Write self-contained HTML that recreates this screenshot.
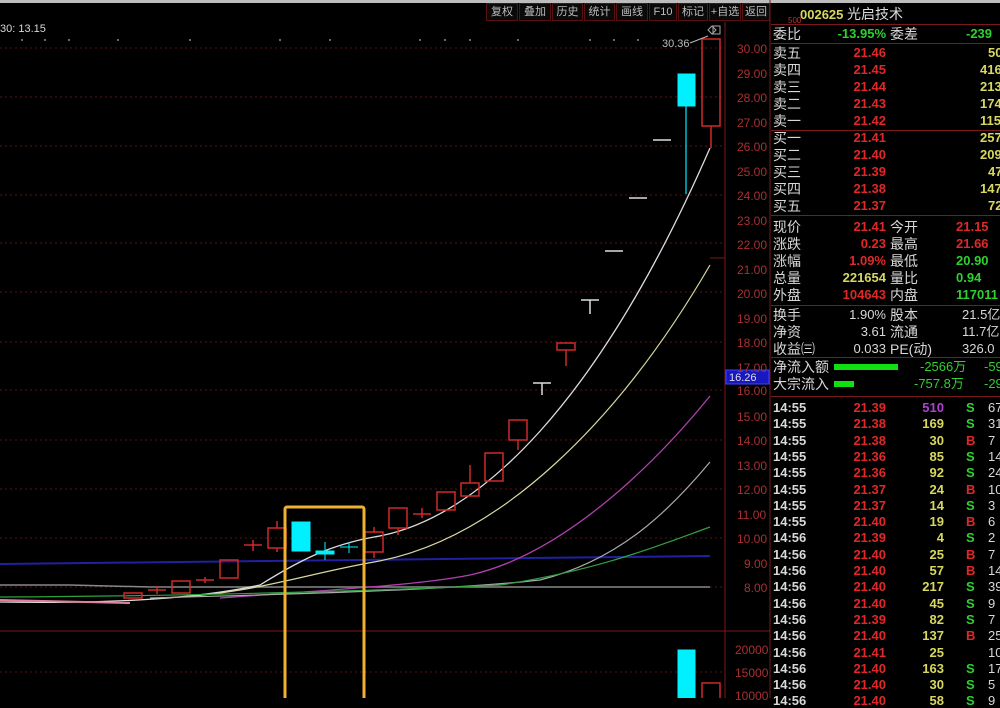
<!DOCTYPE html>
<html><head><meta charset="utf-8"><style>
*{margin:0;padding:0;box-sizing:border-box}
body{width:1000px;height:698px;background:#000;overflow:hidden;position:relative;font-family:"Liberation Sans","Noto Sans CJK SC",sans-serif}
.t{position:absolute;white-space:nowrap;font-size:13px;line-height:14px}
.btn{position:absolute;top:3px;height:18px;border:1px solid #5a1010;color:#bbb;font-size:11px;line-height:16px;text-align:center;background:#0a0a0a;white-space:nowrap;overflow:hidden}
.w{color:#d8d8d8}.r{color:#e02828;font-weight:bold}.y{color:#d8d860;font-weight:bold}.g{color:#30d030;font-weight:bold}.ax{color:#a83030;font-size:12px}
.lb{font-size:14px}
.hl{position:absolute;left:771px;width:229px;height:1px;background:#7a1a1a}
</style></head><body>
<div style="position:absolute;left:0;top:0;width:1000px;height:3px;background:#bdbdbd"></div>
<div class="btn" style="left:486px;width:32px">复权</div>
<div class="btn" style="left:519px;width:32px">叠加</div>
<div class="btn" style="left:552px;width:31px">历史</div>
<div class="btn" style="left:584px;width:31px">统计</div>
<div class="btn" style="left:616px;width:32px">画线</div>
<div class="btn" style="left:649px;width:28px">F10</div>
<div class="btn" style="left:678px;width:30px">标记</div>
<div class="btn" style="left:709px;width:32px">+自选</div>
<div class="btn" style="left:742px;width:28px">返回</div>
<div class="t w" style="left:0;top:22px;font-size:11px">30: 13.15</div>

<svg width="1000" height="698" style="position:absolute;left:0;top:0">
<g stroke="#5a1515" stroke-dasharray="2,3" stroke-width="1">
<line x1="0" y1="48" x2="725" y2="48"/><line x1="0" y1="97" x2="725" y2="97"/><line x1="0" y1="146" x2="725" y2="146"/><line x1="0" y1="195" x2="725" y2="195"/><line x1="0" y1="243" x2="725" y2="243"/><line x1="0" y1="292" x2="725" y2="292"/><line x1="0" y1="342" x2="725" y2="342"/><line x1="0" y1="390" x2="725" y2="390"/><line x1="0" y1="440" x2="725" y2="440"/><line x1="0" y1="489" x2="725" y2="489"/><line x1="0" y1="538" x2="725" y2="538"/><line x1="0" y1="587" x2="725" y2="587"/><line x1="0" y1="672" x2="725" y2="672"/>
</g>
<line x1="0" y1="631" x2="770" y2="631" stroke="#7a1a1a"/>
<line x1="725" y1="22" x2="725" y2="698" stroke="#7a1a1a"/>
<line x1="770" y1="0" x2="770" y2="698" stroke="#7a1a1a"/>
<g fill="#888"><circle cx="22" cy="40" r="1"/><circle cx="45" cy="40" r="1"/><circle cx="69" cy="40" r="1"/><circle cx="118" cy="40" r="1"/><circle cx="190" cy="40" r="1"/><circle cx="280" cy="40" r="1"/><circle cx="330" cy="40" r="1"/><circle cx="420" cy="40" r="1"/><circle cx="445" cy="40" r="1"/><circle cx="470" cy="40" r="1"/><circle cx="518" cy="40" r="1"/><circle cx="590" cy="40" r="1"/><circle cx="614" cy="40" r="1"/><circle cx="638" cy="40" r="1"/></g>
<line x1="0" y1="564" x2="710" y2="556" stroke="#2020a0" stroke-width="2"/>
<polyline points="0,585 70,585 150,587 710,587" fill="none" stroke="#888" stroke-width="1.5"/>
<path d="M0,602 C120,604 200,598 260,585 C300,560 330,545 374,537 C480,520 600,400 710,148" fill="none" stroke="#ddd" stroke-width="1.3"/>
<path d="M160,598 C250,595 300,575 374,562 C500,540 620,420 710,265" fill="none" stroke="#d8d8a0" stroke-width="1.2"/>
<path d="M220,598 C330,590 420,585 470,575 C560,555 650,470 710,396" fill="none" stroke="#b040b0" stroke-width="1.3"/>
<path d="M150,598 C300,594 450,590 540,580 C620,560 670,510 710,462" fill="none" stroke="#aaa" stroke-width="1.2"/>
<path d="M0,597 C200,596 400,590 500,585 C600,570 660,545 710,527" fill="none" stroke="#30a040" stroke-width="1.2"/>
<line x1="0" y1="600" x2="130" y2="603" stroke="#e080a0" stroke-width="2"/>
<g fill="none" stroke="#d02828" stroke-width="1.5">
<rect x="124" y="593" width="18" height="5"/>
<line x1="148" y1="590" x2="166" y2="590"/><line x1="157" y1="586" x2="157" y2="594"/>
<rect x="172" y="581" width="18" height="12"/>
<line x1="196" y1="580" x2="214" y2="580"/><line x1="205" y1="577" x2="205" y2="583"/>
<rect x="220" y="560" width="18" height="18"/>
<line x1="244" y1="545" x2="262" y2="545"/><line x1="253" y1="540" x2="253" y2="551"/>
<rect x="268" y="528" width="18" height="20"/><line x1="277" y1="521" x2="277" y2="528"/><line x1="277" y1="548" x2="277" y2="552"/>
<rect x="365" y="532" width="18" height="20"/><line x1="374" y1="527" x2="374" y2="532"/><line x1="374" y1="552" x2="374" y2="558"/>
<rect x="389" y="508" width="18" height="20"/><line x1="398" y1="528" x2="398" y2="535"/>
<line x1="413" y1="514" x2="431" y2="514"/><line x1="422" y1="508" x2="422" y2="518"/>
<rect x="437" y="492" width="18" height="18"/>
<rect x="461" y="483" width="18" height="13"/><line x1="470" y1="465" x2="470" y2="483"/>
<rect x="485" y="453" width="18" height="28"/>
<rect x="509" y="420" width="18" height="20"/><line x1="518" y1="440" x2="518" y2="450"/>
<rect x="557" y="343" width="18" height="7"/><line x1="566" y1="350" x2="566" y2="366"/>
<rect x="702" y="39" width="18" height="87"/><line x1="711" y1="126" x2="711" y2="148"/>
<rect x="702" y="683" width="18" height="20"/>
</g>
<g stroke="#ddd" stroke-width="1.5">
<line x1="533" y1="383" x2="551" y2="383"/><line x1="542" y1="383" x2="542" y2="395"/>
<line x1="581" y1="300" x2="599" y2="300"/><line x1="590" y1="300" x2="590" y2="314"/>
<line x1="605" y1="251" x2="623" y2="251"/><line x1="629" y1="198" x2="647" y2="198"/><line x1="653" y1="140" x2="671" y2="140"/>
</g>
<g fill="#00f0ff" stroke="#00f0ff">
<rect x="292" y="522" width="18" height="29"/>
<rect x="316" y="551" width="18" height="3"/><line x1="325" y1="542" x2="325" y2="560"/>
<line x1="340" y1="547" x2="358" y2="547"/><line x1="349" y1="542" x2="349" y2="553"/>
<rect x="678" y="74" width="17" height="32"/><line x1="686" y1="106" x2="686" y2="194" stroke-width="1.2"/>
<rect x="678" y="650" width="17" height="48"/>
</g>
<text x="662" y="47" fill="#bbb" font-size="11" font-family="Liberation Sans">30.36</text>
<line x1="690" y1="43" x2="708" y2="36" stroke="#bbb"/>
<path d="M712,26 l4,4 l-4,4 l-4,-4z" fill="none" stroke="#aaa"/>
<rect x="713" y="26" width="7" height="8" fill="none" stroke="#aaa"/>
<rect x="285" y="507" width="79" height="200" fill="none" stroke="#f0b030" stroke-width="3" rx="2"/>
<rect x="726" y="370" width="43" height="14" fill="#1818c0" stroke="#4040ff"/>
<text x="729" y="381" fill="#ddd" font-size="11" font-family="Liberation Sans">16.26</text>
<g stroke="#7a1a1a"><line x1="710" y1="258" x2="725" y2="258"/></g>
</svg>

<div class="t ax" style="left:737px;top:42px">30.00</div>
<div class="t ax" style="left:737px;top:67px">29.00</div>
<div class="t ax" style="left:737px;top:91px">28.00</div>
<div class="t ax" style="left:737px;top:116px">27.00</div>
<div class="t ax" style="left:737px;top:140px">26.00</div>
<div class="t ax" style="left:737px;top:165px">25.00</div>
<div class="t ax" style="left:737px;top:189px">24.00</div>
<div class="t ax" style="left:737px;top:214px">23.00</div>
<div class="t ax" style="left:737px;top:238px">22.00</div>
<div class="t ax" style="left:737px;top:263px">21.00</div>
<div class="t ax" style="left:737px;top:287px">20.00</div>
<div class="t ax" style="left:737px;top:312px">19.00</div>
<div class="t ax" style="left:737px;top:336px">18.00</div>
<div class="t ax" style="left:737px;top:361px">17.00</div>
<div class="t ax" style="left:737px;top:384px">16.00</div>
<div class="t ax" style="left:737px;top:410px">15.00</div>
<div class="t ax" style="left:737px;top:434px">14.00</div>
<div class="t ax" style="left:737px;top:459px">13.00</div>
<div class="t ax" style="left:737px;top:483px">12.00</div>
<div class="t ax" style="left:737px;top:508px">11.00</div>
<div class="t ax" style="left:737px;top:532px">10.00</div>
<div class="t ax" style="left:744px;top:557px">9.00</div>
<div class="t ax" style="left:744px;top:581px">8.00</div>
<div class="t ax" style="left:735px;top:643px">20000</div>
<div class="t ax" style="left:735px;top:666px">15000</div>
<div class="t ax" style="left:735px;top:689px">10000</div>

<div class="t" style="left:788px;top:14px;font-size:8px;color:#c03030">500</div>
<div class="t y" style="left:800px;top:7px;font-size:13px">002625 <span style="color:#ddd;font-weight:normal;font-size:14px">光启技术</span></div>
<div class="hl" style="top:24px"></div>
<div class="hl" style="top:43px"></div>
<div class="hl" style="top:130px"></div>
<div class="hl" style="top:215px"></div>
<div class="hl" style="top:305px"></div>
<div class="hl" style="top:357px"></div>
<div class="hl" style="top:396px"></div>
<div id="rp"></div>
<script>
var h='';
function row(y,a,b,bc,c){h+='<div class="t w lb" style="left:773px;top:'+y+'px">'+a+'</div>';
h+='<div class="t '+bc+'" style="right:114px;top:'+y+'px">'+b+'</div>';
if(c)h+='<div class="t w lb" style="left:890px;top:'+y+'px">'+c+'</div>';}
function rv(y,v,cls,x){h+='<div class="t '+cls+'" style="left:'+x+'px;top:'+y+'px">'+v+'</div>';}
row(27,'委比','-13.95%','g','委差');rv(27,'-239','g',966);
var s=[['卖五','21.46','50'],['卖四','21.45','416'],['卖三','21.44','213'],['卖二','21.43','174'],['卖一','21.42','115']];
s.forEach(function(e,i){row(46+i*17,e[0],e[1],'r');rv(46+i*17,e[2],'y',1004-e[2].length*8);});
var b=[['买一','21.41','257'],['买二','21.40','209'],['买三','21.39','47'],['买四','21.38','147'],['买五','21.37','72']];
b.forEach(function(e,i){row(131+i*17,e[0],e[1],'r');rv(131+i*17,e[2],'y',1004-e[2].length*8);});
var m=[['现价','21.41','r','今开','21.15','r'],['涨跌','0.23','r','最高','21.66','r'],['涨幅','1.09%','r','最低','20.90','g'],['总量','221654','y','量比','0.94','g'],['外盘','104643','r','内盘','117011','g']];
m.forEach(function(e,i){row(220+i*17,e[0],e[1],e[2],e[3]);rv(220+i*17,e[4],e[5],956);});
var n=[['换手','1.90%','股本','21.5亿'],['净资','3.61','流通','11.7亿'],['收益㈢','0.033','PE(动)','326.0']];
n.forEach(function(e,i){row(308+i*17,e[0],e[1],'w',e[2]);rv(308+i*17,e[3],'w',962);});
h+='<div class="t w lb" style="left:773px;top:360px">净流入额</div><div style="position:absolute;left:834px;top:364px;width:64px;height:6px;background:#10e010"></div><div class="t g" style="left:920px;top:360px;font-weight:normal">-2566万</div><div class="t g" style="left:984px;top:360px;font-weight:normal">-59</div>';
h+='<div class="t w lb" style="left:773px;top:377px">大宗流入</div><div style="position:absolute;left:834px;top:381px;width:20px;height:6px;background:#10e010"></div><div class="t g" style="left:914px;top:377px;font-weight:normal">-757.8万</div><div class="t g" style="left:984px;top:377px;font-weight:normal">-29</div>';
var t=[['14:55','21.39','510','S','67','#b040d0'],['14:55','21.38','169','S','31'],['14:55','21.38','30','B','7'],['14:55','21.36','85','S','14'],['14:55','21.36','92','S','24'],['14:55','21.37','24','B','10'],['14:55','21.37','14','S','3'],['14:55','21.40','19','B','6'],['14:56','21.39','4','S','2'],['14:56','21.40','25','B','7'],['14:56','21.40','57','B','14'],['14:56','21.40','217','S','39'],['14:56','21.40','45','S','9'],['14:56','21.39','82','S','7'],['14:56','21.40','137','B','25'],['14:56','21.41','25','','10'],['14:56','21.40','163','S','17'],['14:56','21.40','30','S','5'],['14:56','21.40','58','S','9']];
t.forEach(function(e,i){var y=401+i*16.3;
h+='<div class="t w" style="left:773px;top:'+y+'px;font-weight:bold">'+e[0]+'</div>';
h+='<div class="t r" style="right:114px;top:'+y+'px">'+e[1]+'</div>';
h+='<div class="t y" style="right:56px;top:'+y+'px;'+(e[5]?'color:'+e[5]:'')+'">'+e[2]+'</div>';
if(e[3])h+='<div class="t" style="left:966px;top:'+y+'px;font-weight:bold;color:'+(e[3]=='S'?'#30d030':'#e02828')+'">'+e[3]+'</div>';
h+='<div class="t w" style="left:988px;top:'+y+'px">'+e[4]+'</div>';});
document.getElementById('rp').innerHTML=h;
</script>
</body></html>
